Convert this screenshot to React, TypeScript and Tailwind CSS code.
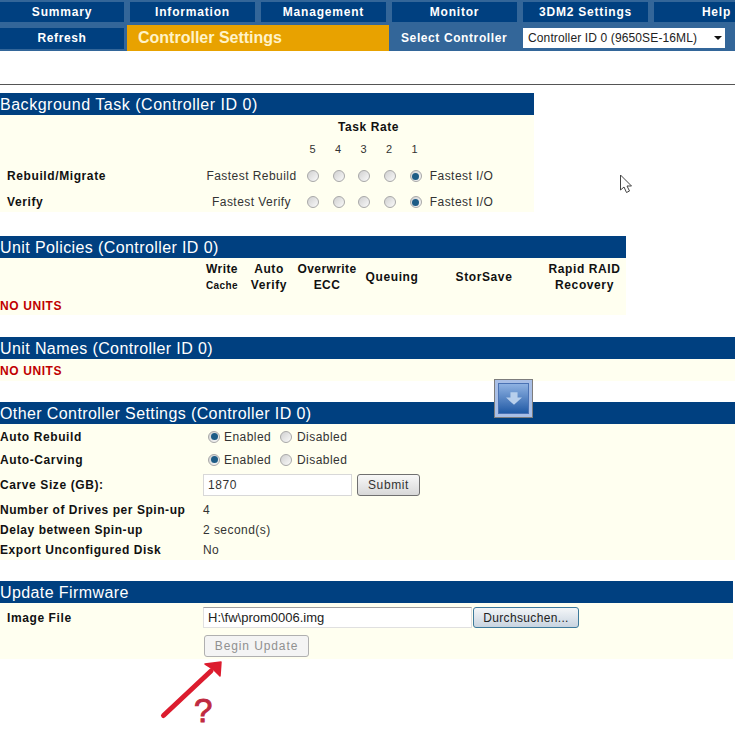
const NAV = [
  { label: 'Summary', width: 'w-[124px]' },
  { label: 'Information', width: 'w-[125px]' },
  { label: 'Management', width: 'w-[125px]' },
  { label: 'Monitor', width: 'w-[125px]' },
  { label: '3DM2 Settings', width: 'w-[125px]' },
  { label: 'Help', width: 'w-[125px]' },
]

const RATES = [5, 4, 3, 2, 1]

function Radio({ on }: { on?: boolean }) {
  return (
    <span className="flex h-[12px] w-[12px] shrink-0 items-center justify-center rounded-full border border-[#a8a8a8] bg-gradient-to-br from-[#d0d0d0] to-[#fafafa]">
      {on && <span className="h-[7px] w-[7px] rounded-full bg-[#1d5c86]" />}
    </span>
  )
}

function Section({
  title,
  width,
  tracking = 'tracking-[0.4px]',
  children,
}: {
  title: string
  width: string
  tracking?: string
  children: React.ReactNode
}) {
  return (
    <section className={width}>
      <h2 className={`flex h-[22px] items-center bg-[#004080] pt-[1px] text-[16px] leading-none font-normal text-white ${tracking}`}>
        {title}
      </h2>
      <div className="bg-[#fffff0]">{children}</div>
    </section>
  )
}

function RateRow({ label, speed }: { label: string; speed: string }) {
  return (
    <div className="grid h-[26px] grid-cols-[203px_97px_repeat(5,25.75px)_1fr] items-center">
      <span className="pl-[7px] font-bold text-[#111]">{label}</span>
      <span className="text-center tracking-[0.45px] text-[#333]">{speed}</span>
      {RATES.map((r) => (
        <span key={r} className="flex justify-center">
          <Radio on={r === 1} />
        </span>
      ))}
      <span className="pl-[1px] tracking-[0.45px] text-[#333]">Fastest I/O</span>
    </div>
  )
}

function ToggleRow({ label }: { label: string }) {
  return (
    <div className="flex h-[23px] items-center">
      <span className="w-[208px] font-bold text-[#111]">{label}</span>
      <Radio on />
      <span className="ml-[4px] w-[56px] tracking-[0.45px] text-[#333]">Enabled</span>
      <Radio />
      <span className="ml-[5px] tracking-[0.45px] text-[#333]">Disabled</span>
    </div>
  )
}

function InfoRow({ label, value }: { label: string; value: string }) {
  return (
    <div className="flex h-[20px] items-center">
      <span className="w-[203px] font-bold tracking-[0.55px] text-[#111]">{label}</span>
      <span className="tracking-[0.45px] text-[#333]">{value}</span>
    </div>
  )
}

export default function App() {
  return (
    <div className="relative h-[730px] w-[735px] overflow-hidden bg-white font-['Liberation_Sans',Arial,sans-serif] text-[12px] tracking-[0.6px]">
      {/* top nav */}
      <nav className="h-[51px] bg-[#336699] font-bold text-white">
        <div className="flex gap-[6px] pt-[2px] tracking-[0.8px]">
          {NAV.map((n) => (
            <a key={n.label} className={`flex h-[20px] shrink-0 items-center justify-center bg-[#004080] ${n.width}`}>
              {n.label}
            </a>
          ))}
        </div>
        <div className="mt-[3px] flex h-[26px]">
          <a className="mt-[3px] flex h-[21px] w-[124px] items-center justify-center bg-[#004080] pb-[2px]">Refresh</a>
          <div className="ml-[3px] flex w-[262px] items-center bg-[#e8a200] pl-[11px] text-[16px] tracking-normal text-[#fff3c8]">
            Controller Settings
          </div>
          <span className="ml-[12px] flex w-[122px] items-center">Select Controller</span>
          <div className="relative mt-[3px] h-[20px] w-[202px]">
            <select className="h-full w-full appearance-none bg-white pl-[5px] text-[12px] font-normal tracking-[0.13px] text-[#222]">
              <option>Controller ID 0 (9650SE-16ML)</option>
            </select>
            <span className="absolute top-[8px] right-[3px] h-0 w-0 border-x-[4px] border-t-[4px] border-x-transparent border-t-[#111]" />
          </div>
        </div>
      </nav>

      <hr className="mt-[33px] border-t border-[#555]" />

      <div className="mt-[8px]">
        <Section title="Background Task (Controller ID 0)" width="w-[534px]" tracking="tracking-[0.52px]">
          <div className="h-[97px]">
            <div className="flex h-[23px] items-center justify-center pl-[203px] font-bold text-[#111]">Task Rate</div>
            <div className="grid h-[25px] grid-cols-[203px_97px_repeat(5,25.5px)_1fr] items-center pb-[2px] text-[11px] text-[#333]">
              <span className="col-start-3 text-center">5</span>
              <span className="text-center">4</span>
              <span className="text-center">3</span>
              <span className="text-center">2</span>
              <span className="text-center">1</span>
            </div>
            <RateRow label="Rebuild/Migrate" speed="Fastest Rebuild" />
            <RateRow label="Verify" speed="Fastest Verify" />
          </div>
        </Section>
      </div>

      <div className="mt-[24px]">
        <Section title="Unit Policies (Controller ID 0)" width="w-[626px]">
          <div className="h-[57px] font-bold text-[#111]">
            <div className="grid h-[37px] grid-cols-[203px_38px_56px_60px_70px_114px_1fr] items-center text-center leading-[16px]">
              <span className="col-start-2 pt-[2px] tracking-[0.4px]">
                Write
                <br />
                <span className="text-[10px]">Cache</span>
              </span>
              <span>
                Auto
                <br />
                Verify
              </span>
              <span className="tracking-[0.4px]">
                Overwrite
                <br />
                ECC
              </span>
              <span>Queuing</span>
              <span>StorSave</span>
              <span className="pl-[2px]">
                Rapid RAID
                <br />
                Recovery
              </span>
            </div>
            <div className="flex h-[22px] items-center text-[#c00000]">NO UNITS</div>
          </div>
        </Section>
      </div>

      <div className="mt-[22px]">
        <Section title="Unit Names (Controller ID 0)" width="w-full">
          <div className="flex h-[22px] items-center pt-[2px] font-bold text-[#c00000]">NO UNITS</div>
        </Section>
      </div>

      <div className="mt-[21px]">
        <Section title="Other Controller Settings (Controller ID 0)" width="w-full">
          <div className="h-[136px] pt-[1px]">
            <ToggleRow label="Auto Rebuild" />
            <ToggleRow label="Auto-Carving" />
            <div className="flex h-[29px] items-center pb-[2px]">
              <span className="w-[203px] font-bold text-[#111]">Carve Size (GB):</span>
              <input
                readOnly
                value="1870"
                className="h-[22px] w-[149px] border border-[#d8d8d8] bg-white pl-[4px] text-[#333]"
              />
              <button className="ml-[5px] h-[22px] w-[63px] rounded-[3px] border border-[#707070] bg-gradient-to-b from-[#f8f8f8] to-[#d8d8d8] text-[#333]">
                Submit
              </button>
            </div>
            <InfoRow label="Number of Drives per Spin-up" value="4" />
            <InfoRow label="Delay between Spin-up" value="2 second(s)" />
            <InfoRow label="Export Unconfigured Disk" value="No" />
          </div>
        </Section>
      </div>

      <div className="mt-[21px]">
        <Section title="Update Firmware" width="w-[733px]">
          <div className="h-[56px] pt-[4px]">
            <div className="flex h-[21px] items-center">
              <span className="w-[203px] pl-[7px] font-bold text-[#111]">Image File</span>
              <input
                readOnly
                value="H:\fw\prom0006.img"
                className="h-[21px] w-[269px] border border-t-[#a0a0a0] border-r-[#e0e0e0] border-b-[#e0e0e0] border-l-[#e0e0e0] bg-white pl-[4px] text-[13px] tracking-normal text-[#222]"
              />
              <button className="ml-[1px] h-[21px] w-[106px] rounded-[3px] border border-[#3d7a9c] bg-gradient-to-b from-[#f4f6f8] to-[#c8d4e0] tracking-[0.35px] text-[#222]">
                Durchsuchen...
              </button>
            </div>
            <button
              disabled
              className="mt-[7px] ml-[204px] block h-[22px] w-[105px] rounded-[3px] border border-[#b0b0b0] bg-[#f4f4f4] tracking-[0.9px] text-[#909090]"
            >
              Begin Update
            </button>
          </div>
        </Section>
      </div>

      {/* floating scroll button over the page */}
      <div className="absolute top-[379px] left-[494px] h-[39px] w-[39px] border border-[#7d7d7d] bg-[#a9bfe6] p-[3px]">
        <div className="flex h-full w-full items-center justify-center border border-[#4a72b4] bg-gradient-to-b from-[#8fb2e2] to-[#1f5aa5]">
          <svg width="16" height="13" viewBox="0 0 18 14">
            <path d="M5 0h8v6h5l-9 8-9-8h5z" fill="#b8cfec" />
          </svg>
        </div>
      </div>

      {/* mouse pointer */}
      <svg className="absolute top-[174px] left-[619px]" width="15" height="20" viewBox="0 0 15 20">
        <path d="M1.5 1v15l3.5-3 2.5 5.5 3-1.5-2.5-5h4.5z" fill="#fff" stroke="#444" strokeWidth="1" />
      </svg>

      {/* red annotation */}
      <svg className="absolute top-[660px] left-[158px]" width="70" height="62" viewBox="0 0 70 62">
        <path d="M5.5 55.5 L53 11" stroke="#dc1c2e" strokeWidth="5" strokeLinecap="round" fill="none" />
        <path d="M47 4 L63 2 L62 16 L55 9z" fill="#dc1c2e" stroke="#dc1c2e" strokeWidth="1.5" strokeLinejoin="round" />
      </svg>
      <span className="absolute top-[693px] left-[194px] text-[33px] leading-[36px] font-normal tracking-normal text-[#bf2a40] [-webkit-text-stroke:1px_#bf2a40]">?</span>
    </div>
  )
}
